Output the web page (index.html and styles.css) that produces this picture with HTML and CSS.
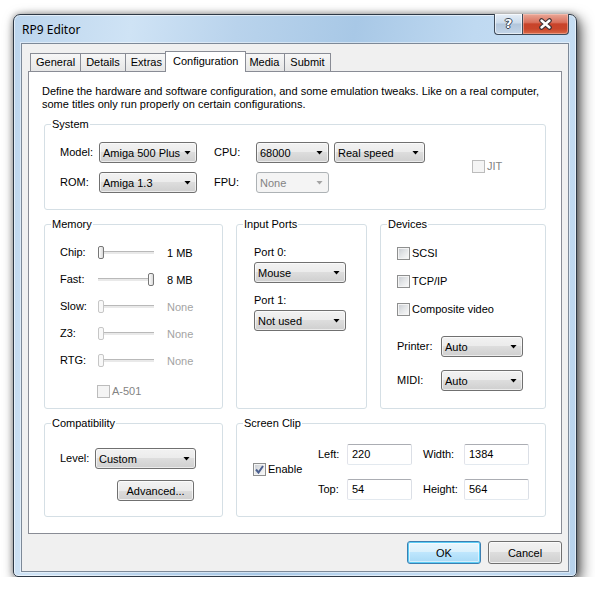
FILE: index.html
```html
<!DOCTYPE html>
<html lang="en">
<head>
    <meta charset="UTF-8">
    <title>RP9 Editor</title>
    <link rel="stylesheet" href="styles.css">
</head>
<body>

<div class="window">
    <div class="titlebar">
        <span class="title">RP9 Editor</span>
        <div class="caption-buttons">
            <div class="cap-btn help"><span>?</span></div>
            <div class="cap-btn close">
                <svg width="15" height="12" viewBox="0 0 15 12">
                    <path d="M3.5 2.5 L11.5 9.5 M11.5 2.5 L3.5 9.5" stroke="#3b2f33" stroke-width="4.6" stroke-linecap="round"/>
                    <path d="M3.5 2.5 L11.5 9.5 M11.5 2.5 L3.5 9.5" stroke="#ffffff" stroke-width="2.4" stroke-linecap="round"/>
                </svg>
            </div>
        </div>
    </div>

    <div class="client">
        <div class="tabs">
            <div class="tab">General</div>
            <div class="tab">Details</div>
            <div class="tab">Extras</div>
            <div class="tab active">Configuration</div>
            <div class="tab">Media</div>
            <div class="tab">Submit</div>
        </div>

        <div class="panel">
            <p class="intro">Define the hardware and software configuration, and some emulation tweaks. Like on a real computer,<br>some titles only run properly on certain configurations.</p>

            <fieldset class="group">
                <legend>System</legend>
                <div class="system-body">
                    <span class="lbl">Model:</span>
                    <div class="combo w98">Amiga 500 Plus</div>
                    <span class="lbl">CPU:</span>
                    <div class="combo w73">68000</div>
                    <div class="combo w91">Real speed</div>
                    <div class="check disabled jit"><span class="box"></span>JIT</div>
                    <span class="lbl">ROM:</span>
                    <div class="combo w98">Amiga 1.3</div>
                    <span class="lbl">FPU:</span>
                    <div class="combo w73 disabled">None</div>
                </div>
            </fieldset>

            <div class="row-three">
                <fieldset class="group">
                    <legend>Memory</legend>
                    <div class="memory-body">
                        <span class="lbl">Chip:</span>
                        <div class="slider"><span class="thumb"></span></div>
                        <span class="val">1 MB</span>

                        <span class="lbl">Fast:</span>
                        <div class="slider end"><span class="thumb"></span></div>
                        <span class="val">8 MB</span>

                        <span class="lbl">Slow:</span>
                        <div class="slider disabled"><span class="thumb"></span></div>
                        <span class="val off">None</span>

                        <span class="lbl">Z3:</span>
                        <div class="slider disabled"><span class="thumb"></span></div>
                        <span class="val off">None</span>

                        <span class="lbl">RTG:</span>
                        <div class="slider disabled"><span class="thumb"></span></div>
                        <span class="val off">None</span>

                        <div class="check disabled a501"><span class="box"></span>A-501</div>
                    </div>
                </fieldset>

                <fieldset class="group">
                    <legend>Input Ports</legend>
                    <div class="ports-body">
                        <div class="port-lbl">Port 0:</div>
                        <div class="combo w92">Mouse</div>
                        <div class="port-lbl second">Port 1:</div>
                        <div class="combo w92">Not used</div>
                    </div>
                </fieldset>

                <fieldset class="group">
                    <legend>Devices</legend>
                    <div class="devices-body">
                        <div class="check"><span class="box"></span>SCSI</div>
                        <div class="check"><span class="box"></span>TCP/IP</div>
                        <div class="check"><span class="box"></span>Composite video</div>
                        <div class="device-grid">
                            <span class="lbl">Printer:</span>
                            <div class="combo w82">Auto</div>
                            <span class="lbl">MIDI:</span>
                            <div class="combo w82">Auto</div>
                        </div>
                    </div>
                </fieldset>
            </div>

            <div class="row-two">
                <fieldset class="group">
                    <legend>Compatibility</legend>
                    <div class="compat-body">
                        <span class="lbl">Level:</span>
                        <div class="combo w101">Custom</div>
                        <div class="button advanced">Advanced...</div>
                    </div>
                </fieldset>

                <fieldset class="group">
                    <legend>Screen Clip</legend>
                    <div class="clip-body">
                        <div class="check enable"><span class="box checked">
                            <svg width="9" height="9" viewBox="0 0 9 9"><path d="M1 4.5 L3.5 7.5 L8 1" fill="none" stroke="#4b5f8f" stroke-width="2"/></svg>
                        </span>Enable</div>
                        <span class="lbl">Left:</span>
                        <div class="field">220</div>
                        <span class="lbl pad">Width:</span>
                        <div class="field">1384</div>
                        <span class="lbl">Top:</span>
                        <div class="field">54</div>
                        <span class="lbl pad">Height:</span>
                        <div class="field">564</div>
                    </div>
                </fieldset>
            </div>
        </div>

        <div class="dialog-buttons">
            <div class="button default">OK</div>
            <div class="button">Cancel</div>
        </div>
    </div>
</div>

</body>
</html>
```

FILE: styles.css
```css
body {
    margin: 0;
    background-color: #fff;
    font-family: "Liberation Sans", Arial, sans-serif;
    font-size: 11px;
    color: #000;
}

/* window frame */

.window {
    box-sizing: border-box;
    width: 564px;
    height: 563px;
    margin: 14px 0 0 13px;
    padding: 0 7px 4px 7px;
    display: flex;
    flex-direction: column;
    border: 1px solid #2d3845;
    border-radius: 7px 7px 5px 5px;
    background: linear-gradient(100deg, #bcd5ed 0%, #cfe3f5 18%, #b9d3ec 34%, #a8c8e6 52%, #bfd9f1 70%, #c6def4 84%, #b7d2ec 100%);
    box-shadow: inset 0 0 0 1px rgba(255, 255, 255, 0.55), 4px 5px 14px rgba(0, 0, 0, 0.65), 0 0 6px rgba(0, 0, 0, 0.35);
}

.titlebar {
    height: 28px;
    display: flex;
    align-items: center;
    justify-content: space-between;
}

.title {
    font-family: "Noto Sans", "Open Sans", sans-serif;
    font-size: 12px;
    padding-left: 1px;
    margin-top: 1px;
}

.caption-buttons {
    align-self: flex-start;
    margin-top: -1px;
    display: flex;
}

.cap-btn {
    box-sizing: border-box;
    height: 21px;
    display: flex;
    align-items: center;
    justify-content: center;
    border: 1px solid #3e4b5a;
    border-top: none;
}

.help {
    width: 28px;
    border-right: none;
    border-radius: 0 0 0 4px;
    background: linear-gradient(#e6eef7 0%, #cbdbeb 45%, #b2c6db 50%, #c3d5e8 100%);
    box-shadow: inset 0 0 0 1px rgba(255, 255, 255, 0.6);
}

.help span {
    font-family: "DejaVu Sans", sans-serif;
    font-weight: bold;
    font-size: 13px;
    color: #fff;
    text-shadow: 1px 0 0 #3a4656, -1px 0 0 #3a4656, 0 1px 0 #3a4656, 0 -1px 0 #3a4656;
    margin-top: -1px;
}

.close {
    width: 47px;
    border-radius: 0 0 4px 0;
    background: linear-gradient(#e9a898 0%, #d9705c 42%, #c8432a 50%, #c9462b 75%, #da6a48 100%);
    box-shadow: inset 0 0 0 1px rgba(255, 210, 200, 0.45);
}

.client {
    flex: 1;
    display: flex;
    flex-direction: column;
    padding: 7px 6px 7px 6px;
    border: 1px solid #7d8998;
    background-color: #f0f0f0;
    box-shadow: 0 0 0 1px rgba(255, 255, 255, 0.45);
}

/* tabs */

.tabs {
    height: 20px;
    display: flex;
    align-items: flex-end;
    padding-left: 2px;
}

.tab {
    box-sizing: border-box;
    height: 18px;
    padding: 0 5px;
    line-height: 17px;
    border: 1px solid #898c95;
    border-bottom: none;
    background: linear-gradient(#f7f7f7, #e6e6e6);
}

.tab + .tab {
    margin-left: -1px;
}

.tab.active {
    position: relative;
    z-index: 1;
    height: 21px;
    margin: 0 -2px -1px -3px;
    padding: 0 7px 2px;
    line-height: 18px;
    background: #fff;
}

.panel {
    box-sizing: border-box;
    height: 463px;
    padding: 13px 15px 16px 15px;
    border: 1px solid #898c95;
    background-color: #fff;
}

.intro {
    margin: 0 0 7px -2px;
    line-height: 13px;
}

/* group boxes */

.group {
    margin: 0;
    padding: 0;
    min-width: 0;
    border: 1px solid #d5dfe5;
    border-radius: 3px;
}

.group legend {
    margin-left: 6px;
    padding: 0 1px;
    line-height: 13px;
}

.row-three {
    display: grid;
    grid-template-columns: 179px 131px 1fr;
    column-gap: 13px;
    margin-top: 8px;
}

.row-two {
    display: grid;
    grid-template-columns: 179px 1fr;
    column-gap: 13px;
    margin-top: 8px;
}

.lbl {
    align-self: center;
    line-height: 13px;
}

/* controls */

.combo {
    box-sizing: border-box;
    height: 21px;
    display: flex;
    align-items: center;
    justify-content: space-between;
    padding: 0 5px 0 3px;
    border: 1px solid #707070;
    border-radius: 3px;
    background: linear-gradient(#f2f2f2 0%, #ebebeb 50%, #dddddd 50%, #cfcfcf 100%);
    box-shadow: inset 0 0 0 1px rgba(255, 255, 255, 0.6);
}

.combo::after {
    content: "";
    width: 7px;
    height: 4px;
    background-color: #000;
    clip-path: polygon(0 0, 100% 0, 50% 100%);
}

.combo.disabled {
    color: #838383;
    border-color: #adb2b5;
    background: #f4f4f4;
    box-shadow: none;
}

.combo.disabled::after {
    background-color: #a3a3a3;
}

.w73 { width: 73px; }
.w82 { width: 82px; }
.w91 { width: 91px; }
.w92 { width: 92px; }
.w98 { width: 98px; }
.w101 { width: 101px; }

.button {
    box-sizing: border-box;
    display: flex;
    align-items: center;
    justify-content: center;
    border: 1px solid #707070;
    border-radius: 3px;
    background: linear-gradient(#f2f2f2 0%, #ebebeb 50%, #dddddd 50%, #cfcfcf 100%);
    box-shadow: inset 0 0 0 1px rgba(255, 255, 255, 0.7);
}

.button.default {
    border-color: #3c7fb1;
    background: linear-gradient(#eaf6fd 0%, #d9f0fc 50%, #bee6fd 50%, #a7d9f5 100%);
    box-shadow: inset 0 0 0 1px #5ccdf5, inset 0 0 0 2px rgba(255, 255, 255, 0.5);
}

.field {
    box-sizing: border-box;
    width: 65px;
    height: 21px;
    padding-left: 4px;
    line-height: 19px;
    border: 1px solid;
    border-color: #abadb3 #dbdfe6 #e3e9ef #e2e3ea;
    border-radius: 2px;
    background-color: #fff;
}

.check {
    display: flex;
    align-items: center;
    line-height: 13px;
}

.check .box {
    box-sizing: border-box;
    width: 13px;
    height: 13px;
    margin-right: 2px;
    display: flex;
    align-items: center;
    justify-content: center;
    border: 1px solid #8e8f8f;
    background: linear-gradient(135deg, #c6cad0 0%, #e4e6e8 50%, #fbfbfb 100%);
    box-shadow: inset 0 0 0 1px #f4f4f4;
}

.check.disabled {
    color: #838383;
}

.check.disabled .box {
    border-color: #bcbcbc;
    background: #f4f4f4;
    box-shadow: none;
}

.slider {
    width: 56px;
    height: 21px;
    display: flex;
    align-items: center;
    background: linear-gradient(transparent 9px, #b9b9b9 9px, #b9b9b9 10px, #e9e9e9 10px, #e9e9e9 12px, transparent 12px);
}

.slider.end {
    justify-content: flex-end;
}

.thumb {
    box-sizing: border-box;
    width: 6px;
    height: 13px;
    border: 1px solid #777;
    border-radius: 2px;
    background: linear-gradient(to right, #fff, #dadada);
}

.slider.disabled .thumb {
    border-color: #c6c6c6;
    background: #f8f8f8;
}

/* system */

.system-body {
    display: grid;
    grid-template-columns: 39px 115px 42px 78px 91px 1fr;
    grid-template-rows: 21px 21px;
    row-gap: 9px;
    padding: 11px 0 16px 15px;
}

.jit {
    grid-row: span 2;
    align-self: center;
    margin-left: 47px;
    margin-bottom: 3px;
}

/* memory */

.memory-body {
    display: grid;
    grid-template-columns: 38px 69px auto;
    grid-template-rows: repeat(5, 21px) 25px;
    row-gap: 6px;
    padding: 11px 0 6px 15px;
}

.val {
    align-self: center;
}

.val.off {
    color: #a3a3a3;
}

.a501 {
    grid-column: 2 / 4;
    align-self: end;
    height: 21px;
    margin-left: -1px;
}

/* input ports */

.ports-body {
    padding: 15px 0 0 17px;
}

.port-lbl {
    line-height: 13px;
    margin-bottom: 3px;
}

.port-lbl.second {
    margin-top: 11px;
}

/* devices */

.devices-body {
    display: flex;
    flex-direction: column;
    gap: 15px;
    padding: 16px 0 0 16px;
}

.device-grid {
    display: grid;
    grid-template-columns: 44px 82px;
    grid-auto-rows: 21px;
    row-gap: 13px;
    margin-top: 5px;
}

/* compatibility */

.compat-body {
    display: grid;
    grid-template-columns: 35px 101px;
    grid-auto-rows: 21px;
    row-gap: 11px;
    padding: 18px 0 15px 15px;
}

.advanced {
    grid-column: 2;
    justify-self: end;
    width: 77px;
    margin-right: 2px;
}

/* screen clip */

.clip-body {
    display: grid;
    grid-template-columns: 65px 29px 65px 41px 65px;
    grid-template-rows: 21px 21px;
    row-gap: 14px;
    padding: 14px 0 16px 16px;
}

.enable {
    grid-row: span 2;
    align-self: center;
    margin-bottom: 6px;
}

.lbl.pad {
    padding-left: 11px;
}

.clip-body .lbl.pad + .field {
    margin-left: 11px;
}

/* bottom buttons */

.dialog-buttons {
    display: flex;
    justify-content: flex-end;
    gap: 7px;
    margin-top: 7px;
}

.dialog-buttons .button {
    width: 74px;
    height: 23px;
}
```
